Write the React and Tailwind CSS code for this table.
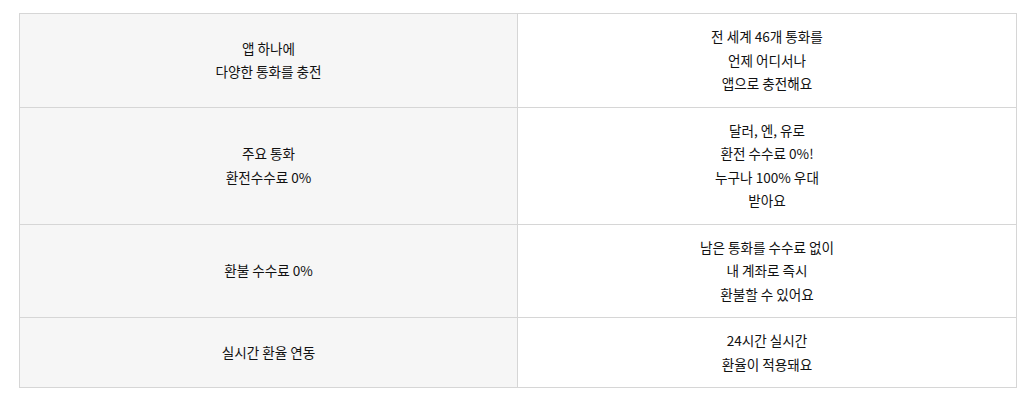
import React from 'react';

const rows = [
    {
        title: ['앱 하나에', '다양한 통화를 충전'],
        desc: ['전 세계 46개 통화를', '언제 어디서나', '앱으로 충전해요'],
    },
    {
        title: ['주요 통화', '환전수수료 0%'],
        desc: ['달러, 엔, 유로', '환전 수수료 0%!', '누구나 100% 우대', '받아요'],
    },
    {
        title: ['환불 수수료 0%'],
        desc: ['남은 통화를 수수료 없이', '내 계좌로 즉시', '환불할 수 있어요'],
    },
    {
        title: ['실시간 환율 연동'],
        desc: ['24시간 실시간', '환율이 적용돼요'],
    },
];

const Lines = ({ lines }) => lines.map((line, i) => <div key={i}>{line}</div>);

export default function App() {
    return (
        <div className="w-[1035px] h-[402px] bg-white pt-[13px] pl-[19px] font-['Noto_Sans_CJK_KR',sans-serif] text-[13.6px] leading-[23.5px] text-[#111]">
            <table className="w-[998px] border-collapse table-fixed">
                <tbody>
                    {rows.map((row, i) => (
                        <tr key={i}>
                            <td className="w-[498px] border border-[#d6d6d6] bg-[#f6f6f6] text-center align-middle py-[11px]">
                                <Lines lines={row.title} />
                            </td>
                            <td className="border border-[#d6d6d6] bg-white text-center align-middle py-[11px]">
                                <Lines lines={row.desc} />
                            </td>
                        </tr>
                    ))}
                </tbody>
            </table>
        </div>
    );
}
